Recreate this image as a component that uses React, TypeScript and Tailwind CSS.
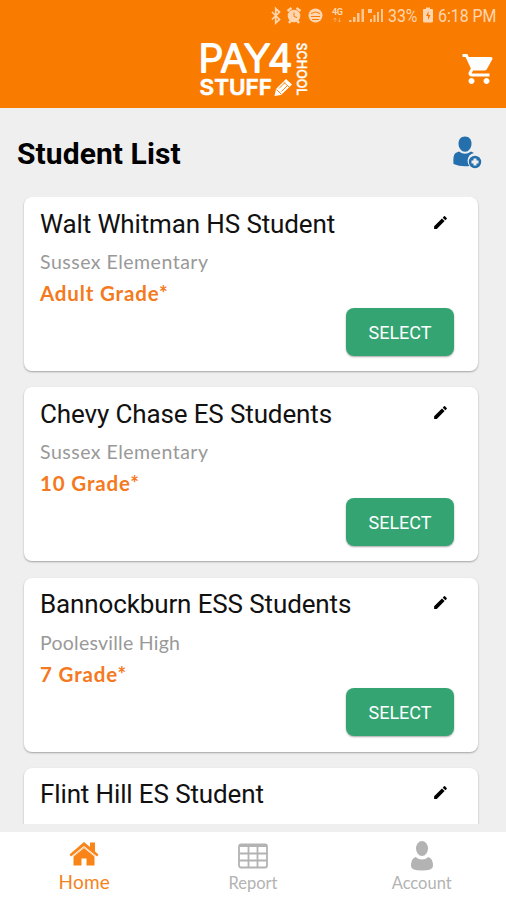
import { MdShoppingCart, MdEdit } from "react-icons/md";

const students = [
    { name: "Walt Whitman HS Student", school: "Sussex Elementary", grade: "Adult Grade*", schoolClass: "tracking-[0.500px]", gradeClass: "tracking-[0.850px]" },
    { name: "Chevy Chase ES Students", school: "Sussex Elementary", grade: "10 Grade*", schoolClass: "tracking-[0.500px]", gradeClass: "tracking-[0.850px]" },
    { name: "Bannockburn ESS Students", school: "Poolesville High", grade: "7 Grade*", schoolClass: "tracking-[0.250px]", gradeClass: "tracking-[0.850px]" },
    { name: "Flint Hill ES Student", school: "", grade: "", schoolClass: "", gradeClass: "" },
];

function StatusBar() {
    return (
        <div className="h-[34px] flex justify-end pr-[8px]">
            <svg className="overflow-visible" width="228" height="34" viewBox="270 0 228 34" fill="#ffd6b0">
                <path d="M272 12l7.500 7.500-3.800 3.500V8.500l3.800 3.500-7.500 7.500" fill="none" stroke="#ffd6b0" strokeWidth="1.700" />
                <circle cx="294" cy="16" r="6.300" />
                <path d="M287.500 11l4-3M300.500 11l-4-3M289 23l1.500-2M299 23l-1.500-2" stroke="#ffd6b0" strokeWidth="2.300" />
                <path d="M294 12.500v4l3 1" fill="none" stroke="#f97c00" strokeWidth="1" />
                <circle cx="315.500" cy="15.500" r="7" />
                <path d="M311 13.500q4.500-3 9 0M311 16.500h9M312 19.500h7" fill="none" stroke="#f97c00" strokeWidth="1" />
                <text x="332" y="15" fontFamily="Roboto, sans-serif" fontSize="9" fontWeight="700" textLength="11">4G</text>
                <path d="M335 18v4m-1.500-2.500l1.500-1.500 1.500 1.500M339.500 18v4m-1.500-1.500l1.500 1.500 1.500-1.500" fill="none" stroke="#ffd6b0" strokeWidth=".7" opacity=".7" />
                <path d="M349 20h2.500v2H349zM353 17h2.500v5H353zM357 13h2.500v9H357zM361.500 9h2.500v13h-2.500z" opacity=".85" />
                <path d="M368 9h4v4h-4zM370 19h2v3h-2zM373.500 15h2v7h-2zM377 12h2v10h-2zM381 9h2v13h-2z" opacity=".85" />
                <text x="388" y="22.300" fontFamily="Roboto, sans-serif" fontSize="18.500" textLength="29.500" lengthAdjust="spacingAndGlyphs">33%</text>
                <path d="M425 9h1V7.500h4V9h2q1 0 1 1v11q0 1.500-1.500 1.500h-7q-1.500 0-1.500-1.500V10q0-1 1-1z" />
                <path d="M428.500 11l-2.500 5h2v4l2.500-5h-2z" fill="#f97c00" />
                <text x="438" y="22.300" fontFamily="Roboto, sans-serif" fontSize="18.500" textLength="58.500" lengthAdjust="spacingAndGlyphs">6:18 PM</text>
            </svg>
        </div>
    );
}

function Logo() {
    return (
        <svg className="overflow-visible" width="112" height="60" viewBox="198 40 112 60" fill="#fff" stroke="#fff" strokeLinejoin="round" fontFamily="Inter, sans-serif">
            <text x="198.500" y="71.500" fontSize="37.500" fontWeight="300" strokeWidth="1.900" textLength="94" lengthAdjust="spacingAndGlyphs">PAY4</text>
            <text x="199.500" y="94.800" fontSize="21.500" fontWeight="600" strokeWidth=".6" textLength="72.500" lengthAdjust="spacingAndGlyphs">STUFF</text>
            <text transform="translate(297 42.500) rotate(90)" fontSize="13.500" fontWeight="500" strokeWidth=".4" textLength="53" lengthAdjust="spacingAndGlyphs">SCHOOL</text>
            <path d="M274.500 96l1.500-7 10-10 6 5.500-11 10.500z" stroke="none" />
            <path d="M276.500 89.500l4.500 4.500M283.500 82l5.500 5M279 88.500l6-6M281.500 91.500l6-6" stroke="#f97c00" strokeWidth=".9" />
        </svg>
    );
}

function AddStudentIcon() {
    return (
        <svg width="30" height="34" viewBox="452 135 30 34" fill="#246fac">
            <path d="M465 136.500c4 0 6.500 2.800 6.500 7 0 4.500-2.800 8.300-6.500 8.300s-6.500-3.800-6.500-8.300c0-4.200 2.500-7 6.500-7z" />
            <path d="M459 151.500q6 4.500 12 0l3 1.500q-6 1-6.500 8 .3 3 2 5-9 1-16-2-.7-9 2-11z" />
            <circle cx="475" cy="162" r="6.200" />
            <path d="M475 158.500v7M471.500 162h7" stroke="#efefef" strokeWidth="3" />
        </svg>
    );
}

function StudentCard({ student }: { student: (typeof students)[0] }) {
    return (
        <div className="h-[174px] shrink-0 mb-[16.300px] bg-white rounded-lg pl-4 pr-6 shadow-[0_1px_2px_rgba(0,0,0,0.32)]">
            <div className="flex justify-between pt-[9.500px]">
                <h2 className="text-[26px] leading-[34px] tracking-[-0.130px] text-[#111] whitespace-nowrap">{student.name}</h2>
                <MdEdit className="size-[17px] mt-[7px] mr-[5px] text-black" />
            </div>
            {student.school && (
                <>
                    <p className={"font-[Lato] text-[19.500px] leading-6 mt-[9.500px] text-[#999] " + student.schoolClass}>{student.school}</p>
                    <p className={"font-[Lato] font-bold text-[20.500px] leading-6 mt-[7px] text-[#f47920] " + student.gradeClass}>{student.grade}</p>
                    <div className="flex justify-end">
                        <button className="mt-[2.500px] w-[108px] h-12 pt-px rounded-lg bg-[#34a572] text-white text-[18px] shadow-[0_1px_2px_rgba(0,0,0,0.35)]">SELECT</button>
                    </div>
                </>
            )}
        </div>
    );
}

function BottomNav() {
    return (
        <nav className="h-[68px] shrink-0 bg-white flex font-[Lato] text-[#b3b3b3]">
            <div className="flex-1 flex flex-col items-center text-[#f58220]">
                <svg className="mt-[9px]" width="30" height="26" viewBox="69.500 841 30 26" fill="#f98518">
                    <path d="M84.500 842l6 5v-4.500h5v9l3.500 3-1.500 2-13-10.500-13 10.500-1.500-2z" />
                    <path d="M74 855.500l10.500-8.500 10.500 8.500V865.500h-8v-7h-5v7h-8z" />
                    <path d="M73 857l11.500-9.300L96 857" fill="none" stroke="#fff" strokeWidth=".8" />
                </svg>
                <span className="text-[19px] leading-6 mt-[2.500px] tracking-[0.200px]">Home</span>
            </div>
            <div className="flex-1 flex flex-col items-center">
                <svg className="mt-[11px]" width="30" height="26" viewBox="0 0 30 26" fill="none" stroke="#b3b3b3" strokeWidth="1.800">
                    <rect x="1" y="1.500" width="28" height="23" rx="2" />
                    <path d="M1 2.500h28" strokeWidth="3" />
                    <path d="M1 10.500h28M1 17.500h28M10.500 3v21M19.500 3v21" />
                </svg>
                <span className="text-[16.500px] leading-6 mt-[2px]">Report</span>
            </div>
            <div className="flex-1 flex flex-col items-center">
                <svg className="mt-[8px]" width="24" height="32" viewBox="0 0 24 32" fill="#b3b3b3">
                    <ellipse cx="12" cy="8.500" rx="6" ry="7.500" />
                    <path d="M5.500 17q6.500 5 13 0 4.500 1.500 4.500 9 0 4.500-11 4.500T1 26q0-7.500 4.500-9z" />
                </svg>
                <span className="text-[16.500px] leading-6 -mt-px">Account</span>
            </div>
        </nav>
    );
}

export default function App() {
    return (
        <div className="w-[506px] h-[900px] flex flex-col overflow-hidden bg-[#efefef] font-[Roboto,sans-serif]">
            <header className="h-[108px] shrink-0 bg-[#f97c00]">
                <StatusBar />
                <div className="flex justify-between items-start pl-[198px] pr-[9px] pt-1.5">
                    <Logo />
                    <MdShoppingCart className="size-9 mt-[11px] text-white" />
                </div>
            </header>
            <div className="flex justify-between shrink-0 h-[89px] pl-[17px] pr-6 pt-[27px]">
                <h1 className="text-[30px] leading-[38px] font-bold text-black tracking-[0.080px]">Student List</h1>
                <AddStudentIcon />
            </div>
            <main className="h-[626.500px] shrink-0 pl-6 pr-7 flex flex-col overflow-hidden">
                {students.map((s) => <StudentCard key={s.name} student={s} />)}
            </main>
            <div className="h-[8.500px] shrink-0" />
            <BottomNav />
        </div>
    );
}
